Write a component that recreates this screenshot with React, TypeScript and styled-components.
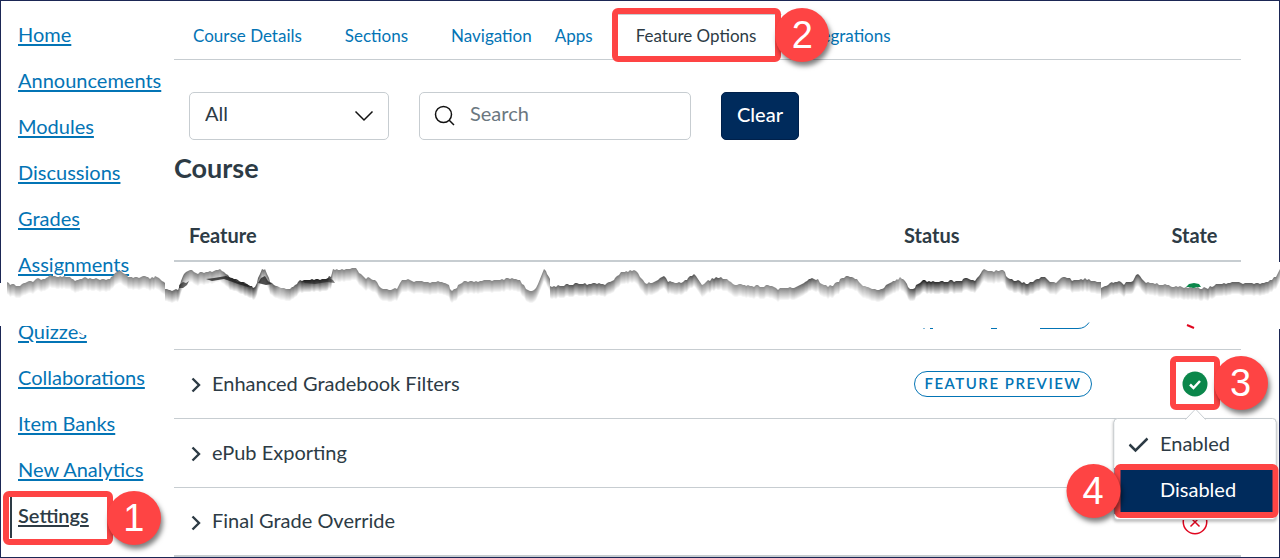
import React from "react";
import styled, { createGlobalStyle, css } from "styled-components";

const ink = "#2d3b45";
const link = "#0374b5";
const line = "#c7cdd1";
const navy = "#002b5c";
const alert = "#fe4444";
const frame = "#1b2755";

const GlobalStyle = createGlobalStyle`
  *, *::before, *::after { box-sizing: border-box; }
  body {
    margin: 0;
    background: #fff;
    color: ${ink};
    font-family: Lato, "Liberation Sans", sans-serif;
    font-size: 20px;
    line-height: 24px;
  }
`;

const Page = styled.div`
  position: relative;
  display: grid;
  grid-template-columns: 173px minmax(0, 1fr);
  border: 1px solid ${frame};
`;

const SideNav = styled.nav`
  padding: 11px 0 0 9px;
`;

const NavList = styled.ul`
  margin: 0;
  padding: 0;
  list-style: none;
`;

const NavItem = styled.li<{ $afterTear?: boolean }>`
  display: flex;
  height: 46px;
  align-items: center;
  margin-top: ${(p) => (p.$afterTear ? 21 : 0)}px;
`;

const NavLink = styled.a<{ $active?: boolean }>`
  position: relative;
  display: flex;
  height: 44px;
  align-items: center;
  padding: 0 0 2px 6px;
  border-left: 2px solid ${(p) => (p.$active ? ink : "transparent")};
  color: ${(p) => (p.$active ? ink : link)};
  font-weight: ${(p) => (p.$active ? 600 : 400)};
  text-decoration: underline;
  text-decoration-thickness: 2px;
  text-underline-offset: 2px;
  white-space: nowrap;
`;

const Main = styled.main`
  padding-right: 38px;
`;

const Tabs = styled.nav`
  display: flex;
  height: 59px;
  padding-top: 13px;
  border-bottom: 1px solid ${line};
  font-size: 17px;
`;

const Tab = styled.a<{ $active?: boolean; $tight?: boolean }>`
  position: relative;
  display: flex;
  align-items: center;
  height: 44px;
  padding: 0 ${(p) => (p.$active ? 25 : p.$tight ? 3 : 23)}px 0 18px;
  border: 1px solid transparent;
  border-top-color: ${(p) => (p.$active ? line : "transparent")};
  color: ${(p) => (p.$active ? ink : link)};
  text-decoration: none;
  white-space: nowrap;
`;

const Toolbar = styled.form`
  display: flex;
  gap: 30px;
  padding: 32px 0 0 15px;
`;

const field = css`
  width: 100%;
  height: 48px;
  border: 1px solid ${line};
  border-radius: 5px;
  background: #fff;
  color: ${ink};
  font: inherit;
`;

const SelectWrap = styled.div`
  position: relative;
  width: 200px;
`;

const Select = styled.select`
  ${field}
  appearance: none;
  padding: 0 40px 6px 15px;
`;

const SearchWrap = styled.div`
  position: relative;
  width: 272px;
`;

const SearchInput = styled.input`
  ${field}
  padding: 0 12px 6px 50px;
  &::placeholder { color: #6b7780; opacity: 1; }
`;

const FieldIcon = styled.svg<{ $side: "left" | "right" }>`
  position: absolute;
  top: 13px;
  ${(p) => p.$side}: 15px;
  pointer-events: none;
`;

const ClearButton = styled.button`
  width: 78px;
  height: 48px;
  padding: 0 0 4px;
  border: 1px solid #00204a;
  border-radius: 5px;
  background: ${navy};
  color: #fff;
  font: inherit;
  font-weight: 500;
`;

const Heading = styled.h2`
  margin: 12px 0 0;
  font-size: 27px;
  line-height: 32px;
  font-weight: 700;
`;

const Table = styled.table`
  width: 100%;
  margin-top: 28px;
  border-collapse: separate;
  border-spacing: 0;
  table-layout: fixed;
`;

const HeadCell = styled.th<{ $width?: number; $center?: boolean }>`
  width: ${(p) => (p.$width ? `${p.$width}px` : "auto")};
  height: 50px;
  padding: 0 15px 2px;
  border-bottom: 2px solid ${line};
  font-weight: 700;
  text-align: ${(p) => (p.$center ? "center" : "left")};
`;

const Row = styled.tr<{ $torn?: boolean; $last?: boolean }>`
  & > td {
    height: ${(p) => (p.$torn ? 88 : 69)}px;
    padding: 0 15px;
    border-bottom: ${(p) => (p.$last ? 2 : 1)}px solid ${line};
  }
`;

const Expander = styled.button`
  display: flex;
  align-items: center;
  gap: 9px;
  padding: 0;
  border: 0;
  background: none;
  color: inherit;
  font: inherit;
`;

const FeatureName = styled.span`
  padding-bottom: 3px;
`;

const Pill = styled.span`
  display: flex;
  width: 178px;
  height: 26px;
  align-items: center;
  justify-content: center;
  margin-left: 10px;
  padding-bottom: 3px;
  border: 1px solid ${link};
  border-radius: 13px;
  color: ${link};
  font-size: 15px;
  line-height: 20px;
  font-weight: 600;
  letter-spacing: 1.5px;
  white-space: nowrap;
`;

const StateSlot = styled.div`
  position: relative;
  display: flex;
  width: 26px;
  height: 26px;
  margin: 0 auto;
`;

const StateButton = styled.button`
  display: flex;
  padding: 0;
  border: 0;
  background: none;
`;

const Menu = styled.div`
  position: absolute;
  z-index: 2;
  top: 47px;
  left: 50%;
  width: 163px;
  padding: 3px 0 5px;
  transform: translateX(-50%);
  border: 1px solid ${line};
  border-radius: 4px;
  background: #fff;
  box-shadow: 0 2px 3px rgba(0, 0, 0, 0.25);
`;

const MenuArrow = styled.svg`
  position: absolute;
  top: -11px;
  left: 70px;
`;

const MenuItem = styled.button<{ $active?: boolean }>`
  position: relative;
  display: flex;
  width: 100%;
  height: 46px;
  align-items: center;
  gap: 10px;
  padding: 0 0 4px 14px;
  border: 0;
  background: ${(p) => (p.$active ? navy : "#fff")};
  color: ${(p) => (p.$active ? "#fff" : ink)};
  font: inherit;
`;

const CheckSlot = styled.span`
  display: flex;
  width: 22px;
  padding-top: 4px;
`;

const Outline = styled.span<{ $inset: string }>`
  position: absolute;
  z-index: 3;
  inset: ${(p) => p.$inset};
  border: 6px solid ${alert};
  border-radius: 6px;
  pointer-events: none;
`;

const Step = styled.span<{ $side?: "left" | "right" }>`
  position: absolute;
  z-index: 4;
  top: -6px;
  ${(p) => p.$side ?? "right"}: -54px;
  display: flex;
  width: 54px;
  height: 54px;
  align-items: center;
  justify-content: center;
  border-radius: 50%;
  background: ${alert};
  box-shadow: 2px 4px 5px rgba(0, 0, 0, 0.5);
  color: #fff;
  font: 400 38px/54px "Liberation Sans", Arial, sans-serif;
`;

const TearLayer = styled.svg`
  position: absolute;
  z-index: 1;
  top: 249px;
  left: -1px;
  width: calc(100% + 2px);
  height: 90px;
  pointer-events: none;
`;

const edge: number[][] = [
  [7, 282], [12, 285], [20, 285], [27, 282], [33, 281], [38, 279], [43, 280], [48, 276], [55, 277],
  [62, 276], [68, 277], [75, 281], [80, 280], [83, 277], [92, 279], [108, 279], [113, 276], [117, 272], [121, 271],
  [125, 274], [128, 277], [135, 278], [143, 276], [150, 278], [157, 276], [162, 280], [165, 283], [165, 289],
  [172, 290], [178, 289], [181, 280], [184, 274], [188, 270], [198, 273], [208, 272], [220, 270], [228, 275],
  [232, 279], [243, 282], [250, 286], [255, 288], [258, 279], [262, 270], [265, 268], [267, 275], [272, 284],
  [279, 287], [288, 289], [295, 286], [300, 280], [310, 280], [326, 279], [331, 276], [333, 270], [340, 269],
  [350, 269], [356, 267], [359, 273], [366, 278], [373, 279], [379, 285], [385, 290], [391, 290], [397, 288],
  [402, 281], [410, 280], [418, 282], [440, 282], [447, 284], [452, 290], [455, 289], [460, 284], [466, 281],
  [478, 281], [500, 280], [512, 278], [520, 281], [524, 286], [528, 290], [534, 290], [538, 284], [542, 274],
  [544, 269], [547, 273], [550, 279], [550, 286], [562, 286], [575, 284], [605, 284], [612, 282], [617, 276],
  [621, 272], [630, 271], [636, 271], [640, 276], [645, 283], [654, 283], [660, 278], [664, 275], [668, 281],
  [675, 283], [683, 282], [690, 277], [694, 275], [698, 278], [702, 285], [708, 281], [714, 278], [721, 277],
  [727, 279], [733, 284], [741, 284], [750, 286], [770, 286], [778, 289], [790, 288], [800, 286], [807, 281],
  [810, 278], [818, 280], [822, 285], [828, 287], [835, 284], [842, 278], [850, 276], [857, 279], [863, 286],
  [870, 288], [877, 290], [884, 289], [888, 283], [895, 281], [900, 278], [905, 280], [908, 287], [913, 289],
  [918, 284], [923, 280], [935, 282], [950, 281], [960, 282], [965, 278], [975, 281], [979, 275], [984, 270],
  [992, 271], [1003, 270], [1008, 279], [1018, 281], [1028, 284], [1035, 280], [1043, 276], [1050, 282],
  [1056, 282], [1063, 277], [1072, 280], [1085, 279], [1101, 282], [1101, 288], [1108, 284], [1117, 281],
  [1124, 284], [1133, 280], [1138, 274], [1144, 282], [1155, 284], [1165, 285], [1172, 287], [1180, 286],
  [1186, 288], [1192, 288], [1200, 288], [1208, 288], [1218, 284], [1232, 282], [1245, 283], [1258, 284],
  [1268, 282], [1276, 276], [1279, 270], [1282, 262],
];

/* Walks the profile in short steps and roughens it like torn paper. */
function roughEdge(points: number[][]): string {
  const out: string[] = [];
  let n = 7;
  for (let i = 0; i < points.length - 1; i++) {
    const [x1, y1] = points[i];
    const [x2, y2] = points[i + 1];
    const steps = Math.max(1, Math.round((x2 - x1) / 2));
    for (let s = 0; s < steps; s++) {
      n = (n * 73 + 41) % 101;
      const x = x1 + ((x2 - x1) * s) / steps;
      const y = Math.round(y1 + ((y2 - y1) * s) / steps + (n / 101 - 0.5) * 2);
      out.push(`${Math.round(x)} ${y}`);
    }
  }
  return out.join("L");
}

const paper = `M${roughEdge(edge)}L1282 262V304H7Z`;

/* Each white sheet lies one pixel lower, so the shade fades evenly to paper. */
const fadeDepth = 12;
const sheets = Array.from({ length: fadeDepth - 1 }, (_, i) => i + 1);

const tones: [number, string][] = [
  [0, "#8c8c8c"], [160, "#8c8c8c"], [166, "#777"], [182, "#666"], [190, "#888"], [222, "#888"],
  [234, "#333"], [250, "#333"], [264, "#777"], [274, "#666"], [280, "#aaa"], [296, "#666"], [305, "#222"],
  [328, "#333"], [334, "#888"], [540, "#888"], [552, "#777"], [575, "#555"], [600, "#666"], [625, "#888"],
  [650, "#888"], [664, "#555"], [675, "#888"], [693, "#555"], [703, "#999"], [716, "#555"], [728, "#999"],
  [790, "#888"], [811, "#555"], [822, "#999"], [850, "#777"], [864, "#aaa"], [888, "#666"], [900, "#999"],
  [922, "#222"], [955, "#444"], [975, "#444"], [986, "#888"], [1003, "#888"], [1012, "#444"], [1045, "#555"],
  [1055, "#888"], [1070, "#666"], [1095, "#777"], [1110, "#666"], [1138, "#555"], [1150, "#888"],
  [1195, "#888"], [1220, "#666"], [1262, "#666"], [1280, "#888"],
];

const TornBand = () => (
  <TearLayer viewBox="0 250 1280 90" preserveAspectRatio="none" aria-hidden="true">
    <defs>
      <linearGradient id="tone" gradientUnits="userSpaceOnUse" x1="0" y1="0" x2="1280" y2="0">
        {tones.map(([x, c]) => (
          <stop key={x} offset={x / 1280} stopColor={c} />
        ))}
      </linearGradient>
    </defs>
    <path d="M-2 283H165V290H1101L1276 284V262H1282V329H1276L1272 328H92V335H83L78 331L72 328L66 326H-2Z" fill="#fff" />
    <path d={paper} fill="url(#tone)" />
    {sheets.map((dy) => (
      <path key={dy} d={paper} fill="#fff" opacity={1 / (fadeDepth + 1 - dy)} transform={`translate(0 ${dy})`} />
    ))}
    <path d={paper} fill="#fff" transform={`translate(0 ${fadeDepth})`} />
    <path d="M-2 304H1282V318H-2Z" fill="#fff" />
    <g fill="#222">
      <path d="M179 285l4-3 3 1 3-2-2 4-4 3-4 0z" opacity="0.7" />
      <path d="M206 279l8-1 12-2 6 2 6 4 6 0 6 4-2 1-10-3-8-3-6-2-12 2z" opacity="0.8" />
      <path d="M258 283l3-5 4-2 3 5 4 3-6 1z" opacity="0.8" />
      <path d="M302 281l10-1 12 0 5-2 4 2 2 3-8-1-12 2-10-1z" opacity="0.6" />
    </g>
    <path d="M1186 287l3-3 5-1 5 1 2 3-3 0-5 1-4-1z" fill="#0b874b" />
    <g fill="none" stroke={link}>
      <path d="M923 328.500h2" opacity="0.5" />
      <path d="M930 328.500h3M991 328.500h6M1040 328.500h38q7 0 11-6" />
      <path d="M1187 325l7 3" stroke="#e0061f" strokeWidth="2" />
    </g>
  </TearLayer>
);

const Chevron = () => (
  <svg width="14" height="18" viewBox="0 0 14 18" fill="none" stroke={ink} strokeWidth="2.400" aria-hidden="true">
    <path d="M3.500 3.500L10 10L3.500 16.500" />
  </svg>
);

const EnabledIcon = () => (
  <svg width="26" height="26" viewBox="0 0 26 26" aria-hidden="true">
    <circle cx="13" cy="13" r="12.500" fill="#0b874b" />
    <path d="M8 13.500l3.500 3.500 6.500-7" fill="none" stroke="#fff" strokeWidth="2.500" />
  </svg>
);

const DisabledIcon = () => (
  <svg width="26" height="26" viewBox="0 0 26 26" fill="none" stroke="#e0061f" strokeWidth="1.500" aria-hidden="true">
    <circle cx="13" cy="13" r="11.750" />
    <path d="M8.500 8.500l9 9M17.500 8.500l-9 9" />
  </svg>
);

const navItems = [
  "Home", "Announcements", "Modules", "Discussions", "Grades", "Assignments",
  "Quizzes", "Collaborations", "Item Banks", "New Analytics", "Settings",
];

const tabItems = ["Course Details", "Sections", "Navigation", "Apps", "Feature Options", "Integrations"];

const Feature = ({ name }: { name: string }) => (
  <td>
    <Expander type="button" aria-expanded="false">
      <Chevron />
      <FeatureName>{name}</FeatureName>
    </Expander>
  </td>
);

export default function App() {
  return (
    <>
      <GlobalStyle />
      <Page>
        <SideNav aria-label="Course">
          <NavList>
            {navItems.map((name) => {
              const active = name === "Settings";
              return (
                <NavItem key={name} $afterTear={name === "Quizzes"}>
                  <NavLink href="#" $active={active} aria-current={active ? "page" : undefined}>
                    {name}
                    {active && (
                      <Outline $inset="-3px -24px -7px -9px">
                        <Step>1</Step>
                      </Outline>
                    )}
                  </NavLink>
                </NavItem>
              );
            })}
          </NavList>
        </SideNav>
        <Main>
          <Tabs aria-label="Settings sections">
            {tabItems.map((name) => {
              const active = name === "Feature Options";
              return (
                <Tab key={name} href="#" $active={active} $tight={name === "Navigation"}>
                  {name}
                  {active && (
                    <Outline $inset="-7px 0 -5px -6px">
                      <Step>2</Step>
                    </Outline>
                  )}
                </Tab>
              );
            })}
          </Tabs>
          <Toolbar onSubmit={(e) => e.preventDefault()}>
            <SelectWrap>
              <Select aria-label="Filter features" defaultValue="All">
                <option>All</option>
              </Select>
              <FieldIcon $side="right" width="20" height="22" viewBox="0 0 20 22" fill="none" stroke="#111" strokeWidth="1.500">
                <path d="M1.500 6.500l8.500 8.500 8.500-8.500" />
              </FieldIcon>
            </SelectWrap>
            <SearchWrap>
              <SearchInput type="search" aria-label="Search" placeholder="Search" />
              <FieldIcon $side="left" width="22" height="22" viewBox="0 0 22 22" fill="none" stroke="#111" strokeWidth="1.500">
                <circle cx="9.500" cy="9.500" r="8" />
                <path d="M15 15l5 5" />
              </FieldIcon>
            </SearchWrap>
            <ClearButton type="button">Clear</ClearButton>
          </Toolbar>
          <Heading>Course</Heading>
          <Table>
            <thead>
              <tr>
                <HeadCell scope="col">Feature</HeadCell>
                <HeadCell scope="col" $width={259}>Status</HeadCell>
                <HeadCell scope="col" $width={93} $center>State</HeadCell>
              </tr>
            </thead>
            <tbody>
              <Row $torn>
                <td />
                <td />
                <td />
              </Row>
              <Row>
                <Feature name="Enhanced Gradebook Filters" />
                <td>
                  <Pill>FEATURE PREVIEW</Pill>
                </td>
                <td>
                  <StateSlot>
                    <StateButton type="button" aria-label="Enabled" aria-haspopup="menu" aria-expanded="true">
                      <EnabledIcon />
                    </StateButton>
                    <Outline $inset="-15px -12px -13px -12px">
                      <Step>3</Step>
                    </Outline>
                    <Menu role="menu">
                      <MenuArrow width="22" height="12" viewBox="0 0 22 12" fill="#fff" stroke={line} aria-hidden="true">
                        <path d="M1 11.500L11 1L21 11.500" />
                        <path d="M1.500 12h19" stroke="#fff" />
                      </MenuArrow>
                      <MenuItem type="button" role="menuitemradio" aria-checked="true">
                        <CheckSlot>
                          <svg width="20" height="16" viewBox="0 0 20 16" fill="none" stroke={ink} strokeWidth="2.500" aria-hidden="true">
                            <path d="M1 7.500l6 6L19 1.500" />
                          </svg>
                        </CheckSlot>
                        Enabled
                      </MenuItem>
                      <MenuItem type="button" role="menuitemradio" aria-checked="false" $active>
                        <CheckSlot />
                        Disabled
                        <Outline $inset="-4px -3px -4px 0">
                          <Step $side="left">4</Step>
                        </Outline>
                      </MenuItem>
                    </Menu>
                  </StateSlot>
                </td>
              </Row>
              <Row>
                <Feature name="ePub Exporting" />
                <td />
                <td />
              </Row>
              <Row $last>
                <Feature name="Final Grade Override" />
                <td />
                <td>
                  <StateSlot>
                    <StateButton type="button" aria-label="Locked off">
                      <DisabledIcon />
                    </StateButton>
                  </StateSlot>
                </td>
              </Row>
            </tbody>
          </Table>
        </Main>
        <TornBand />
      </Page>
    </>
  );
}
